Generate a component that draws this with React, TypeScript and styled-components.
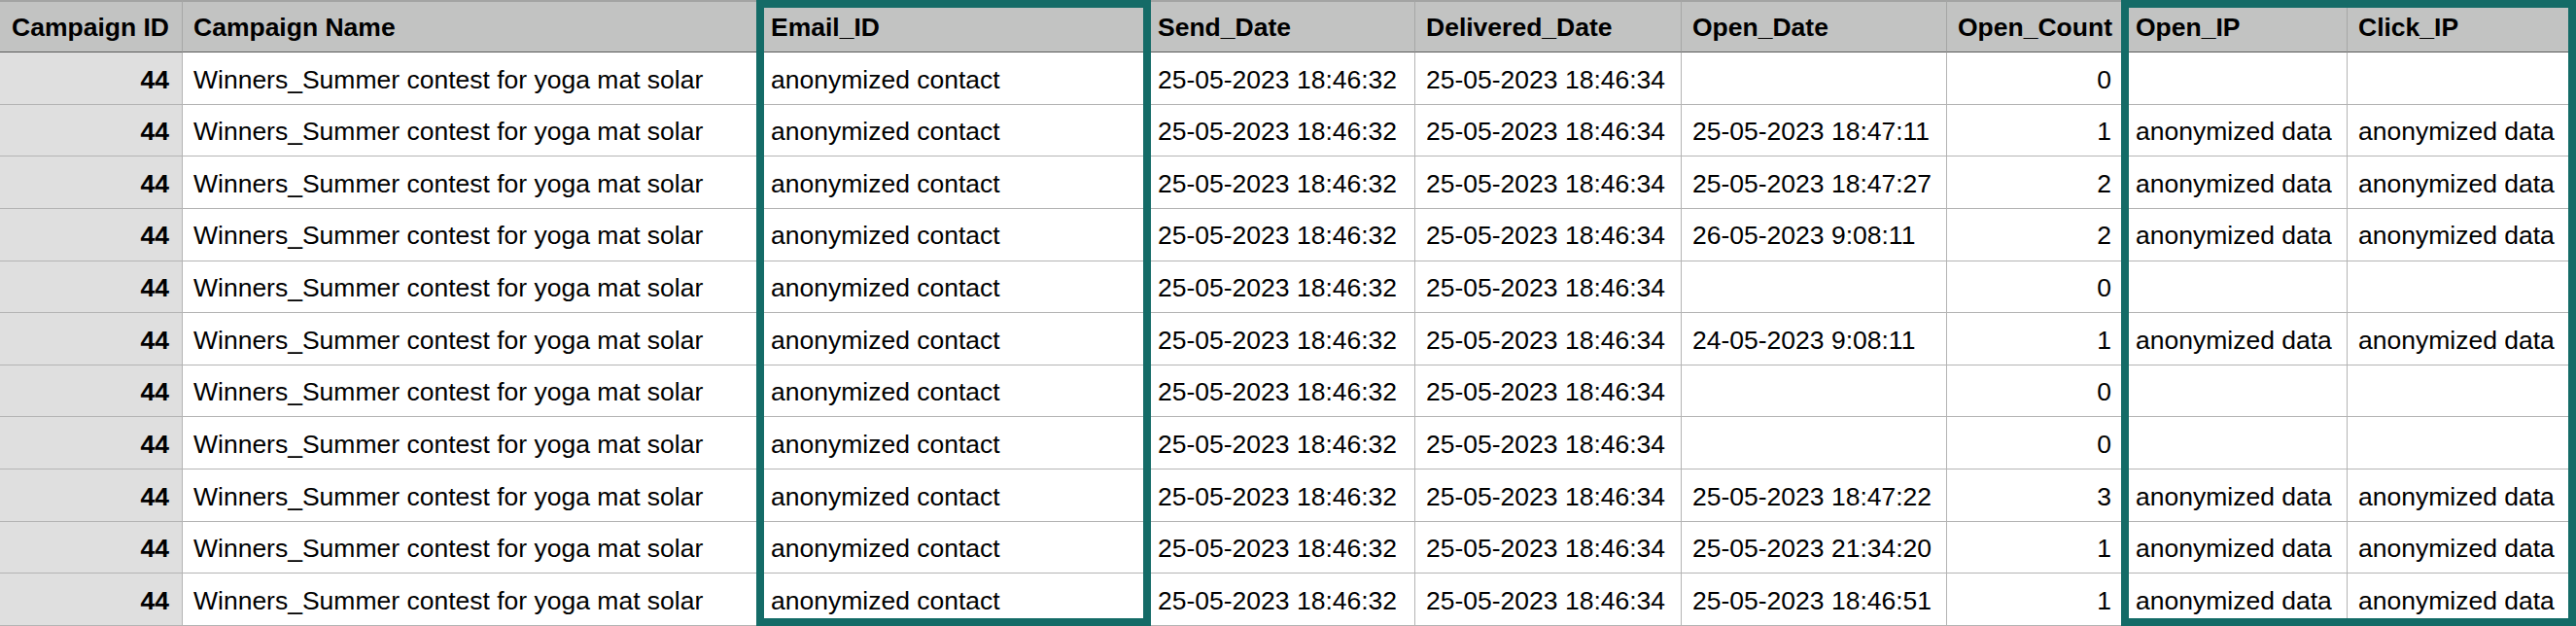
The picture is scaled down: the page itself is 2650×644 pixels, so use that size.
import React from 'react';
import styled, { createGlobalStyle } from 'styled-components';

const GlobalStyle = createGlobalStyle`
  html, body {
    margin: 0;
    padding: 0;
    background: #ffffff;
  }
  body {
    font-family: 'Liberation Sans', Arial, Helvetica, sans-serif;
    color: #000;
  }
`;

type Column = {
  title: string;
  width: number;
  align?: 'left' | 'right';
};

const columns: Column[] = [
  { title: 'Campaign ID', width: 188, align: 'right' },
  { title: 'Campaign Name', width: 594 },
  { title: 'Email_ID', width: 398 },
  { title: 'Send_Date', width: 276 },
  { title: 'Delivered_Date', width: 274 },
  { title: 'Open_Date', width: 273 },
  { title: 'Open_Count', width: 183, align: 'right' },
  { title: 'Open_IP', width: 229 },
  { title: 'Click_IP', width: 235 },
];

const NAME = 'Winners_Summer contest for yoga mat solar';
const CONTACT = 'anonymized contact';
const SENT = '25-05-2023 18:46:32';
const DELIVERED = '25-05-2023 18:46:34';
const IP = 'anonymized data';

// open date, open count, has ip
const opens: [string, number, boolean][] = [
  ['', 0, false],
  ['25-05-2023 18:47:11', 1, true],
  ['25-05-2023 18:47:27', 2, true],
  ['26-05-2023 9:08:11', 2, true],
  ['', 0, false],
  ['24-05-2023 9:08:11', 1, true],
  ['', 0, false],
  ['', 0, false],
  ['25-05-2023 18:47:22', 3, true],
  ['25-05-2023 21:34:20', 1, true],
  ['25-05-2023 18:46:51', 1, true],
];

const rows = opens.map(([openDate, count, hasIp]) => [
  '44',
  NAME,
  CONTACT,
  SENT,
  DELIVERED,
  openDate,
  String(count),
  hasIp ? IP : '',
  hasIp ? IP : '',
]);

// teal boxes drawn over the highlighted column groups
const highlights = [
  { left: 778, width: 406 },
  { left: 2182, width: 468 },
];

export default function App() {
  return (
    <>
      <GlobalStyle />
      <Sheet>
        <Table>
          {columns.map((c, i) => (
            <HeadCell key={c.title} $align={c.align} $first={i === 0}>
              {c.title}
            </HeadCell>
          ))}
          {rows.map((row, r) =>
            row.map((value, i) => (
              <Cell key={`${r}-${i}`} $align={columns[i].align} $key={i === 0}>
                {value}
              </Cell>
            ))
          )}
        </Table>
        {highlights.map((h) => (
          <Highlight key={h.left} style={{ left: h.left, width: h.width }} />
        ))}
      </Sheet>
    </>
  );
}

const Sheet = styled.div`
  position: relative;
  width: 2650px;
  height: 644px;
  overflow: hidden;
  background: #ffffff;
`;

const Table = styled.div`
  display: grid;
  grid-template-columns: ${columns.map((c) => `${c.width}px`).join(' ')};
  grid-template-rows: 54px repeat(11, 1fr);
  height: 644px;
  font-size: 26.5px;
  line-height: 1;
`;

const HeadCell = styled.div<{ $align?: 'left' | 'right'; $first?: boolean }>`
  box-sizing: border-box;
  display: flex;
  align-items: center;
  justify-content: ${(p) => (p.$align === 'right' ? 'flex-end' : 'flex-start')};
  padding: 1px ${(p) => (p.$first ? 13 : 12)}px 0 11px;
  background: #c2c3c2;
  border-top: 2px solid #a3a4a3;
  border-right: 1px solid #a6a7a6;
  border-bottom: 1px solid #5b5b5b;
  font-weight: bold;
  white-space: nowrap;
  overflow: hidden;
`;

const Cell = styled.div<{ $align?: 'left' | 'right'; $key?: boolean }>`
  box-sizing: border-box;
  display: flex;
  align-items: center;
  justify-content: ${(p) => (p.$align === 'right' ? 'flex-end' : 'flex-start')};
  padding: 3px 13px 0 11px;
  background: ${(p) => (p.$key ? '#dfdfdf' : '#ffffff')};
  border-right: 1px solid #b4b4b4;
  border-bottom: 1px solid #b4b4b4;
  font-weight: ${(p) => (p.$key ? 'bold' : 'normal')};
  white-space: nowrap;
  overflow: hidden;
`;

const Highlight = styled.div`
  position: absolute;
  top: 0;
  bottom: 0;
  box-sizing: border-box;
  border: 8px solid #146b67;
  pointer-events: none;
`;
